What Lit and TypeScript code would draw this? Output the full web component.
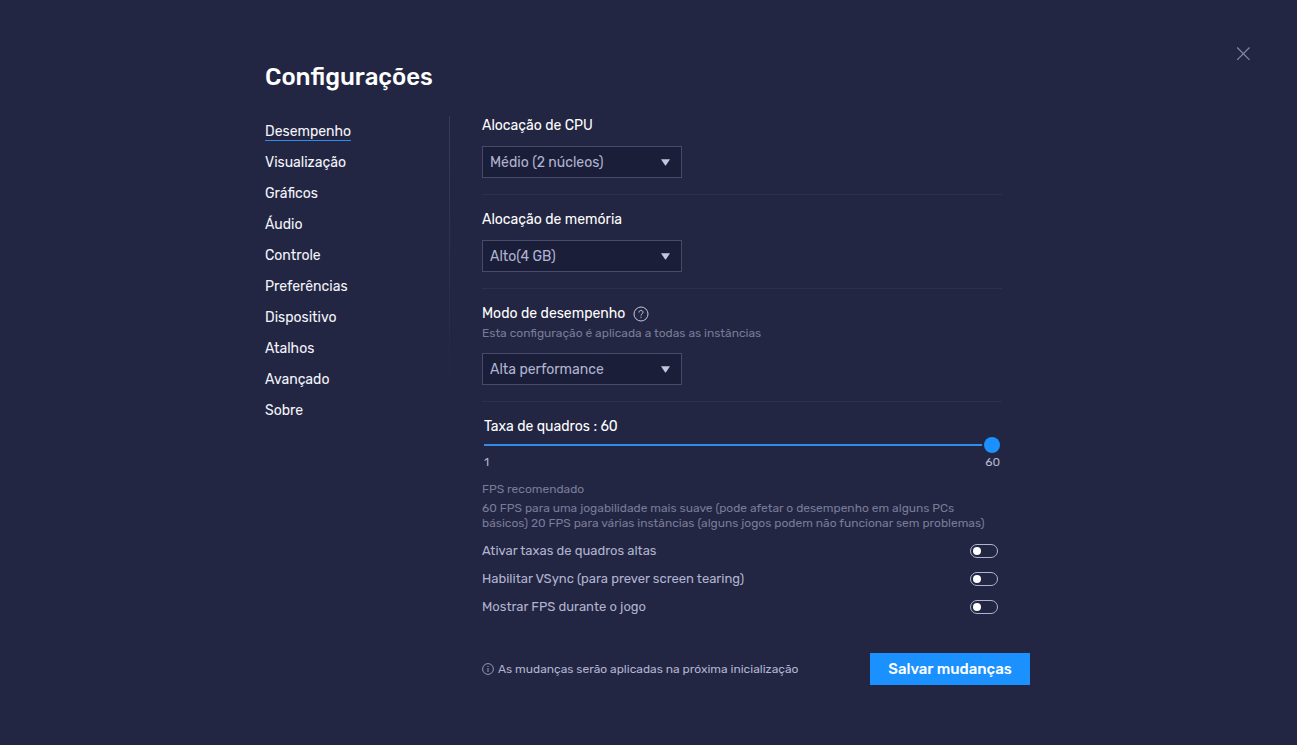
import { LitElement, html, css } from "lit";
import { customElement, state } from "lit/decorators.js";

const SECTIONS = [
  "Desempenho",
  "Visualização",
  "Gráficos",
  "Áudio",
  "Controle",
  "Preferências",
  "Dispositivo",
  "Atalhos",
  "Avançado",
  "Sobre",
];

const TOGGLES = [
  { id: "high-fps", label: "Ativar taxas de quadros altas" },
  { id: "vsync", label: "Habilitar VSync (para prever screen tearing)" },
  { id: "show-fps", label: "Mostrar FPS durante o jogo" },
];

@customElement("app-root")
export class AppRoot extends LitElement {
  @state() private active = "Desempenho";
  @state() private fps = 60;

  static styles = css`
    :host {
      display: block;
      position: relative;
      min-height: 100vh;
      box-sizing: border-box;
      padding: 60px 24px;
      background: #232642;
      color: #fff;
      font: 14px/20px Rubik, Roboto, sans-serif;
    }
    * {
      box-sizing: border-box;
    }
    .close {
      position: absolute;
      top: 44px;
      right: 44px;
      width: 20px;
      height: 20px;
      padding: 0;
      border: 0;
      background: none;
      color: #8487a4;
      cursor: pointer;
    }
    .close svg,
    .help svg,
    .note svg {
      display: block;
    }
    .dialog {
      max-width: 767px;
      margin: 0 auto;
    }
    .title {
      margin: 0 0 22px;
      font-size: 24px;
      line-height: 34px;
      font-weight: 500;
    }
    .body {
      display: grid;
      grid-template-columns: 184px 1fr;
    }
    .nav ul {
      display: flex;
      flex-direction: column;
      align-items: flex-start;
      gap: 11px;
      margin: 0;
      padding: 5px 0 0;
      list-style: none;
    }
    .nav a {
      display: block;
      height: 20px;
      border-bottom: 1px solid transparent;
      color: #f4f5fc;
      line-height: 22px;
      text-decoration: none;
    }
    .nav a.active {
      border-color: #318ce8;
    }
    .content {
      padding-left: 32px;
      border-left: 1px solid;
      border-image: linear-gradient(#393c58 0, #232642 280px) 1;
    }
    .settings {
      max-width: 520px;
    }
    .group {
      padding-bottom: 16px;
      margin-bottom: 15px;
      border-bottom: 1px solid #2d304c;
    }
    .heading {
      display: flex;
      align-items: center;
      gap: 8px;
      height: 20px;
    }
    .help {
      padding: 0;
      border: 0;
      background: none;
      color: #c6c8dc;
      cursor: pointer;
    }
    .hint {
      margin: 0;
      color: #787b98;
      font-size: 12px;
      line-height: 18px;
    }
    .picker {
      position: relative;
      width: 200px;
      margin-top: 10px;
    }
    .hint + .picker {
      margin-top: 11px;
    }
    .picker select {
      display: block;
      appearance: none;
      width: 100%;
      height: 32px;
      margin: 0;
      padding: 2px 28px 0 7px;
      border: 1px solid #474a6b;
      border-radius: 0;
      background: #1b1e38;
      color: #b1b4d0;
      font: inherit;
    }
    .picker svg {
      position: absolute;
      top: 13px;
      right: 12px;
      pointer-events: none;
    }
    .rate {
      padding: 0 2px;
    }
    .rate label {
      display: block;
      height: 20px;
    }
    .slider {
      display: block;
      appearance: none;
      width: 100%;
      height: 16px;
      margin: 0;
      background: linear-gradient(#318ce8, #318ce8) center / 100% 2px no-repeat;
    }
    .slider::-webkit-slider-thumb {
      appearance: none;
      width: 16px;
      height: 16px;
      border-radius: 50%;
      background: #1a91ff;
      box-shadow: 0 0 0 2px #232642;
    }
    .scale {
      display: flex;
      justify-content: space-between;
      color: #b1b4d0;
      font-size: 12px;
      line-height: 18px;
    }
    .advice {
      margin-top: 11px;
      color: #787b98;
      font-size: 12px;
      line-height: 15px;
    }
    .advice p {
      margin: 0 0 4px;
    }
    .toggles {
      display: grid;
      gap: 8px;
      padding: 6px 4px 0 0;
      color: #b1b4d0;
      font-size: 13px;
    }
    .toggle {
      display: flex;
      align-items: center;
      justify-content: space-between;
    }
    .toggle input {
      appearance: none;
      display: flex;
      align-items: center;
      width: 28px;
      height: 14px;
      margin: 0;
      padding: 0 2px;
      border: 1px solid #b1b4d0;
      border-radius: 7px;
    }
    .toggle input::before {
      content: "";
      width: 8px;
      height: 8px;
      border-radius: 50%;
      background: #fff;
    }
    .toggle input:checked {
      justify-content: flex-end;
      background: #1a91ff;
    }
    .footer {
      display: flex;
      align-items: center;
      justify-content: space-between;
      margin-top: 36px;
      padding-right: 2px;
    }
    .note {
      display: flex;
      align-items: center;
      gap: 4px;
      margin: 0;
      color: #b1b4d0;
      font-size: 12px;
    }
    .save {
      width: 160px;
      height: 32px;
      padding: 0;
      border: 0;
      background: #1a91ff;
      color: #fff;
      font: inherit;
      font-size: 15px;
      font-weight: 500;
      cursor: pointer;
    }
  `;

  private picker(id: string, value: string) {
    return html`<div class="picker">
      <select id=${id}>
        <option>${value}</option>
      </select>
      <svg width="9" height="7" viewBox="0 0 9 7" aria-hidden="true">
        <path d="M0 .3h9L5 6.2q-.5.6-1 0z" fill="#c3c6df" />
      </svg>
    </div>`;
  }

  render() {
    return html`
      <button class="close" aria-label="Fechar">
        <svg width="20" height="20" viewBox="0 0 20 20" fill="none" stroke="currentColor" stroke-width="1.2">
          <path d="M4.2 3.5l12.3 12.3M16.5 3.5L4.2 15.8" />
        </svg>
      </button>
      <main class="dialog">
        <h1 class="title">Configurações</h1>
        <div class="body">
          <nav class="nav">
            <ul>
              ${SECTIONS.map(
                (name) => html`<li>
                  <a
                    href="#"
                    class=${name === this.active ? "active" : ""}
                    @click=${(e: Event) => {
                      e.preventDefault();
                      this.active = name;
                    }}
                    >${name}</a
                  >
                </li>`
              )}
            </ul>
          </nav>
          <div class="content">
            <div class="settings">
              <section class="group">
                <div class="heading"><label for="cpu">Alocação de CPU</label></div>
                ${this.picker("cpu", "Médio (2 núcleos)")}
              </section>
              <section class="group">
                <div class="heading"><label for="memory">Alocação de memória</label></div>
                ${this.picker("memory", "Alto(4 GB)")}
              </section>
              <section class="group">
                <div class="heading">
                  <label for="mode">Modo de desempenho</label>
                  <button class="help" aria-label="Ajuda">
                    <svg width="16" height="16" viewBox="0 0 16 16" fill="none" stroke="currentColor">
                      <circle cx="8" cy="8" r="7" />
                      <path d="M6 6.5C6 5.2 6.8 4.5 8 4.5s2 .7 2 1.8c0 1.5-2 1.5-2 3.2" />
                      <path d="M8 10.7v1.1" />
                    </svg>
                  </button>
                </div>
                <p class="hint">Esta configuração é aplicada a todas as instâncias</p>
                ${this.picker("mode", "Alta performance")}
              </section>
              <section class="rate">
                <label for="fps">Taxa de quadros : ${this.fps}</label>
                <input
                  id="fps"
                  class="slider"
                  type="range"
                  min="1"
                  max="60"
                  .value=${String(this.fps)}
                  @input=${(e: Event) => (this.fps = Number((e.target as HTMLInputElement).value))}
                />
                <div class="scale"><span>1</span><span>60</span></div>
              </section>
              <section class="advice">
                <p>FPS recomendado</p>
                <p>
                  60 FPS para uma jogabilidade mais suave (pode afetar o desempenho em alguns PCs
                  básicos) 20 FPS para várias instâncias (alguns jogos podem não funcionar sem problemas)
                </p>
              </section>
              <section class="toggles">
                ${TOGGLES.map(
                  (t) => html`<div class="toggle">
                    <label for=${t.id}>${t.label}</label>
                    <input id=${t.id} type="checkbox" role="switch" />
                  </div>`
                )}
              </section>
            </div>
            <footer class="footer">
              <p class="note">
                <svg width="12" height="12" viewBox="0 0 12 12" fill="none" stroke="currentColor" stroke-width=".8">
                  <circle cx="6" cy="6" r="5.4" />
                  <path d="M6 5v4M6 3v1" />
                </svg>
                As mudanças serão aplicadas na próxima inicialização
              </p>
              <button class="save">Salvar mudanças</button>
            </footer>
          </div>
        </div>
      </main>
    `;
  }
}
